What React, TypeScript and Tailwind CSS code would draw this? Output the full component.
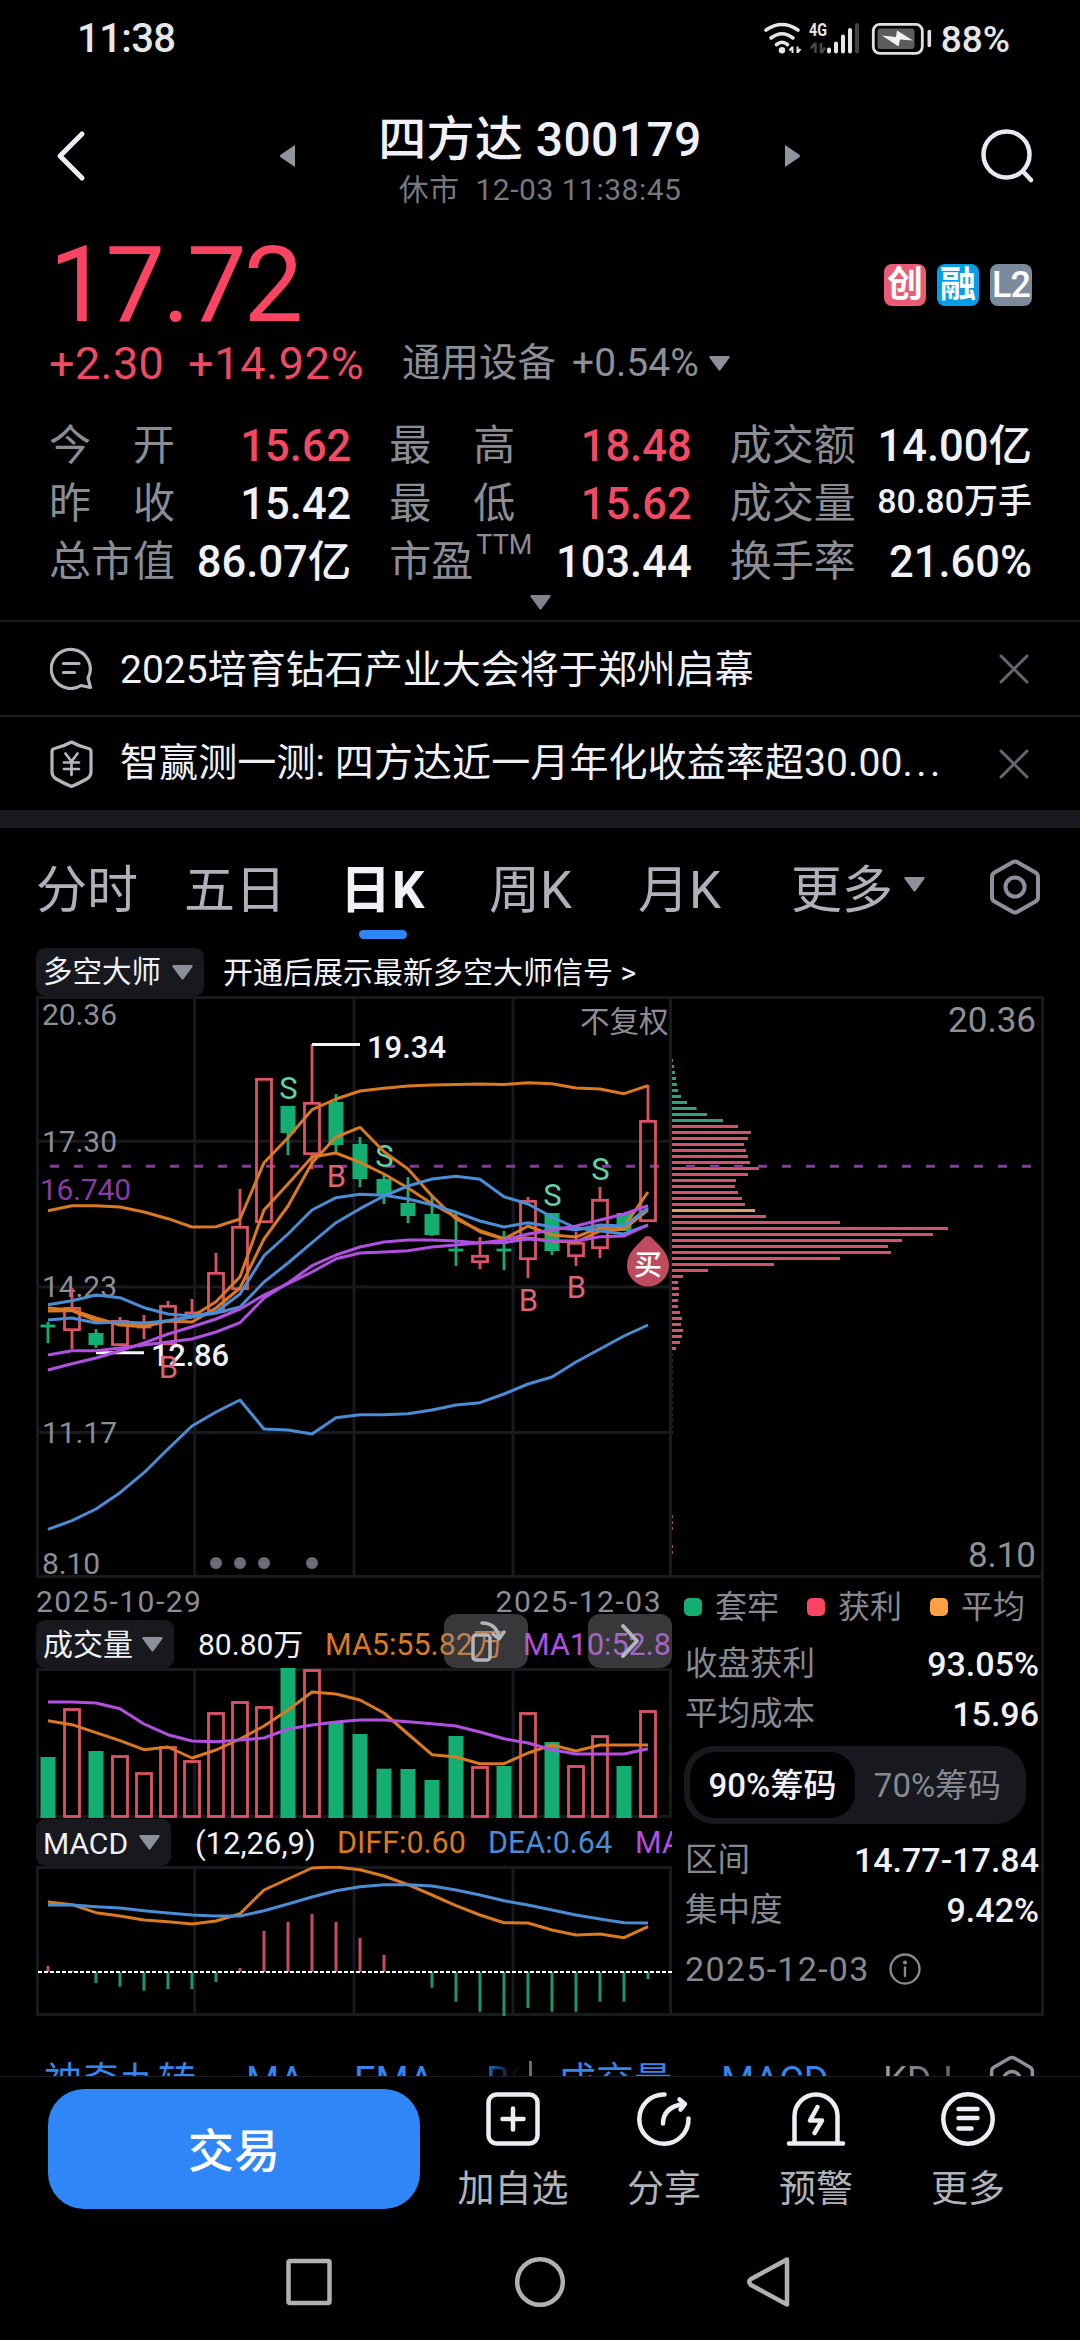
import React from 'react';

const RED = '#dc5366';
const GREEN = '#14ae73';
const ORANGE = '#d97a22';
const BLUE = '#4a8dd4';
const PURPLE = '#b150e0';
const GRID = '#191a1f';

const STEP = 24;
const FIRST_X = 48;
const xAt = (i: number) => FIRST_X + i * STEP;
const toPoints = (ys: number[]) => ys.map((y, i) => `${xAt(i)},${y}`).join(' ');

type Candle = {
  up: boolean;
  top: number;
  bottom: number;
  high: number;
  low: number;
};

const c = (up: boolean, top: number, bottom: number, high: number, low: number): Candle => ({ up, top, bottom, high, low });

const candles: Candle[] = [
  c(false, 1325, 1327, 1322, 1343),
  c(true, 1307, 1331, 1288, 1349),
  c(false, 1333, 1345, 1329, 1348),
  c(true, 1320, 1346, 1317, 1346),
  c(true, 1326, 1328, 1315, 1339),
  c(true, 1305, 1345, 1301, 1345),
  c(true, 1312, 1314, 1299, 1314),
  c(true, 1272, 1313, 1253, 1313),
  c(true, 1226, 1290, 1189, 1290),
  c(true, 1078, 1223, 1078, 1223),
  c(false, 1106, 1133, 1106, 1155),
  c(true, 1102, 1155, 1044, 1169),
  c(false, 1102, 1145, 1094, 1153),
  c(false, 1144, 1179, 1137, 1187),
  c(false, 1179, 1195, 1173, 1204),
  c(false, 1203, 1216, 1177, 1223),
  c(false, 1214, 1235, 1195, 1236),
  c(false, 1249, 1251, 1211, 1266),
  c(true, 1255, 1263, 1237, 1269),
  c(false, 1249, 1251, 1231, 1270),
  c(true, 1200, 1260, 1197, 1278),
  c(false, 1213, 1251, 1213, 1255),
  c(true, 1242, 1257, 1232, 1266),
  c(true, 1199, 1249, 1187, 1258),
  c(false, 1213, 1231, 1213, 1231),
  c(true, 1120, 1222, 1085, 1222),
];

const bollUpper = [1210.7, 1205.7, 1205.7, 1207, 1212, 1218.7, 1227, 1226.7, 1219, 1162.7, 1137.7, 1109.7, 1099, 1091, 1088.3, 1086, 1085, 1084.5, 1084, 1084.5, 1082.7, 1083.7, 1088, 1089, 1093.7, 1085.7];
const bollLower = [1529.3, 1520.7, 1509, 1492.7, 1472.7, 1449, 1426, 1412, 1400, 1429, 1430, 1434, 1417.7, 1414.7, 1414.7, 1413.7, 1410, 1405, 1402.7, 1394, 1384, 1377, 1362, 1349, 1336, 1325];

const averages: { color: string; ys: number[] }[] = [
  { color: ORANGE, ys: [1308, 1310, 1318, 1325, 1326.7, 1320.7, 1316.7, 1301.7, 1276.7, 1210, 1184, 1157, 1153, 1162.3, 1174, 1188, 1203.7, 1217, 1231.7, 1239, 1226, 1235, 1237, 1227.7, 1226.7, 1192] },
  { color: ORANGE, ys: [1311, 1310.7, 1320.7, 1323, 1325, 1321, 1322, 1308, 1288, 1239, 1206, 1163, 1137, 1127.3, 1151.7, 1169, 1196, 1219, 1230.7, 1238.7, 1238, 1241, 1242, 1231, 1229, 1210] },
  { color: BLUE, ys: [1304.7, 1300.7, 1295, 1297.7, 1307.7, 1314, 1316, 1312, 1294, 1255.7, 1234, 1210, 1197.7, 1194.3, 1195.3, 1199, 1204.7, 1212.3, 1221, 1227, 1222.7, 1226.7, 1230, 1225, 1226, 1208] },
  { color: BLUE, ys: [1320, 1318, 1323, 1322, 1323, 1320.7, 1317, 1313, 1307, 1282, 1263, 1242.7, 1222.7, 1208.7, 1196, 1186, 1179, 1176.3, 1179.3, 1196.7, 1204, 1217, 1228, 1230.7, 1234, 1225] },
  { color: PURPLE, ys: [1355, 1350.7, 1350.7, 1348, 1345, 1342, 1339, 1332, 1322.7, 1298, 1283, 1265.7, 1255, 1247, 1242, 1240, 1240, 1241, 1243, 1240, 1234, 1230, 1226, 1220, 1214, 1205.7] },
  { color: PURPLE, ys: [1370, 1363.7, 1358, 1350.7, 1343, 1334, 1326.7, 1319, 1309, 1295, 1283.7, 1272, 1258.7, 1253, 1252, 1250.7, 1247, 1245, 1242.7, 1242.7, 1239, 1241, 1241, 1236.7, 1236, 1225] },
];

const signals: { text: 'S' | 'B'; x: number; y: number }[] = [
  { text: 'B', x: 168, y: 1378 },
  { text: 'S', x: 288, y: 1099 },
  { text: 'B', x: 336, y: 1187 },
  { text: 'S', x: 384, y: 1167 },
  { text: 'B', x: 528, y: 1311 },
  { text: 'S', x: 552, y: 1206 },
  { text: 'B', x: 576, y: 1298 },
  { text: 'S', x: 600, y: 1180 },
];

const chips = [1, 2, 3, 4, 5, 6, 9, 15, 24.5, 35, 51, 66, 79, 76, 72, 74, 76, 78, 87, 76, 64, 63, 66, 70, 73, 83, 94, 168, 276, 261, 230, 216, 219, 168, 102, 36, 11, 6, 7, 7, 6, 6, 8, 10, 9, 11, 10, 8, 4];

const volumes: [number, boolean][] = [
  [1757, false], [1708, true], [1751, false], [1755, true], [1772, true], [1746, true], [1760, true], [1712, true], [1701, true],
  [1706, true], [1668, false], [1669, true], [1722, false], [1734, false], [1768.7, false], [1769, false], [1780, false], [1736, false],
  [1766, true], [1766, false], [1712, true], [1742, false], [1765, true], [1735, true], [1766, false], [1710, true],
];
const volMa5 = [1720.7, 1724.7, 1732.7, 1740.7, 1749.7, 1747, 1758, 1750, 1739, 1726, 1710, 1692, 1694, 1700, 1713, 1734, 1754.7, 1757, 1763.7, 1763.7, 1753, 1745, 1751, 1745, 1745, 1745];
const volMa10 = [1702, 1702, 1703, 1708.7, 1724, 1734.7, 1741, 1741.7, 1740, 1738, 1729, 1725, 1722, 1720, 1720, 1721.7, 1723.7, 1726, 1732, 1738.7, 1743, 1749.7, 1754, 1754, 1754, 1748.7];

const diff = [1902, 1904.7, 1912.7, 1916, 1920, 1921.7, 1924, 1921, 1913.7, 1890, 1879, 1868, 1867, 1869.7, 1876, 1884.7, 1895, 1905.7, 1915, 1922.7, 1923, 1930, 1935, 1934, 1937.7, 1926.7];
const dea = [1905, 1905, 1906.7, 1908, 1910.7, 1913, 1915, 1916, 1916, 1910.7, 1904, 1897, 1890.7, 1886.7, 1884.7, 1884.7, 1886, 1890, 1895, 1900.7, 1905, 1910, 1915, 1919, 1922.7, 1923];
const macdBars = [1966, 1970.7, 1983, 1986.7, 1990.7, 1989, 1989, 1982, 1968, 1931, 1922, 1914, 1922, 1938, 1955, 1970.7, 1987.7, 2001.7, 2011.7, 2016, 2008, 2011.7, 2011.7, 2001.7, 2001.7, 1979];
const ZERO_Y = 1972;

const Caret = ({ className }: { className?: string }) => (
  <svg className={className} viewBox="0 0 21 15" fill="currentColor">
    <path d="M1.5 0h18c1 0 1.500 1 1 1.800L11.500 14c-.5.8-1.500.8-2 0L.5 1.800C0 1 .5 0 1.500 0z" />
  </svg>
);

const CloseIcon = () => (
  <svg className="h-[30px] w-[30px]" viewBox="0 0 30 30" fill="none" stroke="#646771" strokeWidth={3} strokeLinecap="round">
    <path d="M2 2l26 26M28 2L2 28" />
  </svg>
);

const HexIcon = ({ className }: { className?: string }) => (
  <svg className={className} viewBox="0 0 52 56" fill="none" stroke="currentColor" strokeWidth={4} strokeLinejoin="round">
    <path d="M23.500 3.200a5 5 0 015 0l18 10.300a5 5 0 012.500 4.300v20.400a5 5 0 01-2.500 4.300l-18 10.300a5 5 0 01-5 0l-18-10.300A5 5 0 013 38.200V17.800a5 5 0 012.500-4.300z" />
    <circle cx="26" cy="28" r="9.500" />
  </svg>
);

const StatusBar = () => (
  <div className="flex h-[78px] items-center justify-between pl-[77px] pr-[70px] text-[#e6e6e6]">
    <span className="text-[40px] font-medium leading-none tracking-[-0.6px]">11:38</span>
    <div className="flex items-center">
      <svg className="h-[36px] w-[176px] overflow-visible" viewBox="760 19 176 36">
        <g fill="none" stroke="#e6e6e6" strokeWidth={3.6} strokeLinecap="round">
          <path d="M764 28q16-11 32 0" />
          <path d="M769 36q11-8.500 22 0" />
          <path d="M774.500 42.500q5.500-4.500 11 0" />
        </g>
        <circle cx="780" cy="48.300" r="3.200" fill="#e6e6e6" />
        <path d="M790.500 44.500v6.500M790.500 45l-3 3.500M795.500 51v-6.500M795.500 50.500l3-3.500" stroke="#e6e6e6" strokeWidth={2} fill="none" />
        <text x="807" y="34" fontSize="18" fontWeight="700" textLength="18" lengthAdjust="spacingAndGlyphs" fill="#e6e6e6">4G</text>
        <path d="M813.500 41v10M813 41l-4 5.500M819 51V41M819.500 51l3.500-5.500" stroke="#4a4a4a" strokeWidth={2.500} fill="none" />
        <g strokeWidth={4} strokeLinecap="round" stroke="#e6e6e6">
          <path d="M827 47.500v2M834 41.500v8M841 34.500v15M848 28v21.500" />
          <path d="M855 23v26.500" stroke="#444" />
        </g>
        <rect x="871.300" y="22.300" width="49" height="29" rx="6.500" fill="none" stroke="#e0e0e0" strokeWidth={2.800} />
        <rect x="875.500" y="26.500" width="37" height="20.500" rx="3" fill="#5c5c5c" />
        <path d="M880 33.500l14 1.500 1-6.500 16 10-13-1-1.500 7z" fill="#f0f0f0" />
        <path d="M927.300 29.500v14" stroke="#e0e0e0" strokeWidth={3.600} strokeLinecap="round" />
      </svg>
      <span className="ml-[3px] text-[37px] font-medium leading-none">88%</span>
    </div>
  </div>
);

const Header = () => (
  <div className="flex h-[156px] items-center pl-[55px]">
    <svg className="h-[52px] w-[32px]" viewBox="0 0 32 52" fill="none" stroke="#eceef6" strokeWidth={5} strokeLinecap="round" strokeLinejoin="round">
      <path d="M27 4L5 26l22 22" />
    </svg>
    <svg className="ml-[193px] h-[22px] w-[15px]" viewBox="0 0 15 22" fill="#9195a0">
      <path d="M15 0v22L1 12.500q-2-1.500 0-3z" />
    </svg>
    <div className="flex w-[490px] flex-col items-center whitespace-nowrap pt-[10px]">
      <div className="text-[48px] font-medium leading-[56px] tracking-[0.4px] text-[#f0f1f8]">四方达 300179</div>
      <div className="mt-[2px] text-[30px] leading-[40px] tracking-[0.5px] text-[#757881]">休市&nbsp; 12-03 11:38:45</div>
    </div>
    <svg className="h-[22px] w-[15px]" viewBox="0 0 15 22" fill="#9195a0">
      <path d="M0 0v22l14-9.500q2-1.500 0-3z" />
    </svg>
    <svg className="ml-[179px] h-[56px] w-[56px]" viewBox="0 0 56 56" fill="none" stroke="#e8eaf3" strokeWidth={4.500} strokeLinecap="round">
      <circle cx="27.500" cy="26.500" r="23" />
      <path d="M44.500 44l7.500 8" />
    </svg>
  </div>
);

const Quote = () => (
  <div className="pl-[49px] pr-[48px]">
    <div className="flex h-[102px] items-center justify-between">
      <span className="text-[106px] leading-[102px] tracking-[-3px] text-[#fb4362]">17.72</span>
      <div className="flex gap-[11px] text-[36px] font-bold leading-[42px] text-white">
        <span className="h-[42px] w-[42px] rounded-[8px] bg-[#eb5c74] text-center">创</span>
        <span className="h-[42px] w-[42px] rounded-[8px] bg-[#069fe5] text-center">融</span>
        <span className="h-[42px] w-[42px] rounded-[8px] bg-[#7c8a9e] text-center font-medium tracking-[-1px]">L2</span>
      </div>
    </div>
    <div className="flex h-[54px] items-center whitespace-nowrap pt-[1px] leading-none">
      <span className="w-[139px] text-[45px] tracking-[0.4px] text-[#ee4a64]">+2.30</span>
      <span className="w-[214px] text-[45px] tracking-[0.7px] text-[#ee4a64]">+14.92%</span>
      <span className="w-[170px] text-[38.500px] text-[#8c8f98]">通用设备</span>
      <span className="text-[39px] text-[#8c8f98]">+0.54%</span>
      <Caret className="ml-[10px] h-[15px] w-[21px] text-[#8c909b]" />
    </div>
  </div>
);

interface StatProps {
  label: string;
  value: string;
  red?: boolean;
  small?: boolean;
  sup?: string;
}

const Stat = ({ label, value, red, small, sup }: StatProps) => (
  <div className="flex h-[58px] items-center justify-between whitespace-nowrap leading-none">
    <div className={`relative flex text-[42px] text-[#8b8d95] ${sup ? '' : 'w-[126px] justify-between'}`}>
      {label.split('').map((ch, i) => <span key={i}>{ch}</span>)}
      {sup && <span className="absolute left-[87px] top-[-9px] text-[27px]">{sup}</span>}
    </div>
    <span className={`font-medium ${red ? 'text-[#f24a63]' : 'text-[#f0f1f7]'} ${small ? 'pb-[6px] text-[34px]' : 'pt-[1px] text-[43.500px]'}`}>{value}</span>
  </div>
);

const Stats = () => (
  <div className="pt-[27px]">
    <div className="grid grid-cols-3 gap-x-[38px] pl-[49px] pr-[48px]">
      <Stat label="今开" value="15.62" red />
      <Stat label="最高" value="18.48" red />
      <Stat label="成交额" value="14.00亿" />
      <Stat label="昨收" value="15.42" />
      <Stat label="最低" value="15.62" red />
      <Stat label="成交量" value="80.80万手" small />
      <Stat label="总市值" value="86.07亿" />
      <Stat label="市盈" value="103.44" sup="TTM" />
      <Stat label="换手率" value="21.60%" />
    </div>
    <div className="flex h-[29px] justify-center pt-[4px]">
      <Caret className="h-[15px] w-[21px] text-[#80838f]" />
    </div>
  </div>
);

const News = () => (
  <div className="border-b-[18px] border-[#181a1f]">
    <div className="flex h-[95px] items-center border-t-2 border-[#1b1c20] pl-[50px] pr-[51px]">
      <svg className="h-[43px] w-[43px]" viewBox="0 0 43 43" fill="none" stroke="#b3b6be" strokeWidth={3.200} strokeLinecap="round" strokeLinejoin="round">
        <path d="M31 38.500A19.500 19.500 0 1138 31l2.500 9.500z" />
        <path d="M13.500 16.500H29M13.500 25.500h11" />
      </svg>
      <span className="ml-[27px] flex-1 pt-[4px] text-[39px] leading-none text-[#f0f1f7]">2025培育钻石产业大会将于郑州启幕</span>
      <CloseIcon />
    </div>
    <div className="flex h-[95px] items-center border-t-2 border-[#1b1c20] pl-[50px] pr-[51px]">
      <svg className="h-[48px] w-[43px]" viewBox="0 0 43 48" fill="none" stroke="#b3b6be" strokeWidth={3.200} strokeLinecap="round" strokeLinejoin="round">
        <path d="M21.500 2q8 4.500 17 6.500a3 3 0 012.500 3V32q0 4-3.500 6.500Q29 43.500 21.500 46.500 14 43.500 5.500 38.500 2 36 2 32V11.500a3 3 0 012.500-3Q13.500 6.500 21.500 2z" />
        <path d="M15.500 13.500l6 8 6-8M21.500 21.500V35M14 22.500h15M14 29h15" strokeWidth={2.700} />
      </svg>
      <span className="ml-[27px] flex-1 whitespace-nowrap text-[39px] leading-none tracking-[0.1px] text-[#f0f1f7]">
        智赢测一测: 四方达近一月年化收益率超30.00<span className="tracking-[3.5px]">...</span>
      </span>
      <CloseIcon />
    </div>
  </div>
);

const Tabs = () => (
  <div className="flex h-[120px] pl-[36px] text-[51px] leading-[126px] text-[#aeb1ba]">
    <span className="w-[148px]">分时</span>
    <span className="w-[156px]">五日</span>
    <div className="relative w-[149px] font-bold tracking-[1px] text-[#f0f1f8]">
      日K
      <i className="absolute left-[19px] top-[102px] h-[9px] w-[48px] rounded-full bg-[#2e86f7]" />
    </div>
    <span className="w-[149px]">周K</span>
    <span className="w-[153px]">月K</span>
    <span className="w-[113px]">更多</span>
    <Caret className="mt-[49px] h-[15px] w-[21px] text-[#8c909b]" />
    <HexIcon className="ml-[64px] mt-[31px] h-[56px] w-[52px] text-[#8c909b]" />
  </div>
);

const Chip = ({ label, className }: { label: string; className: string }) => (
  <div className={`flex h-full shrink-0 items-center justify-between rounded-[9px] bg-[#17191e] pl-[7px] pr-[11px] text-[#f0f1f7] ${className}`}>
    <span className="pt-[2px]">{label}</span>
    <Caret className="h-[15px] w-[21px] text-[#8c909b]" />
  </div>
);

const KLineChart = () => (
  <svg className="block h-[582px] w-[636px]" viewBox="36 996 636 582">
    <g stroke={GRID} strokeWidth={3} fill="none">
      <path d="M37.500 996v582M194.700 998v579M354 998v579M513 998v579M670.500 996v582" />
      <path d="M36 997.500h636M36 1141.300h636M36 1287h636M36 1432.500h636M36 1576.500h636" />
    </g>
    <g fill="#8b8e97" fontSize="30">
      <text x="42" y="1025" textLength="75">20.36</text>
      <text x="42" y="1152" textLength="75">17.30</text>
      <text x="42" y="1297" textLength="75">14.23</text>
      <text x="42" y="1443" textLength="75">11.17</text>
      <text x="42" y="1574" textLength="58">8.10</text>
      <text x="580" y="1032" fontSize="29.500">不复权</text>
      <text x="40" y="1200" textLength="91" fill="#873ba5">16.740</text>
    </g>
    <path d="M50 1166.300H672" stroke="#813a9e" strokeWidth={3} strokeDasharray="9 15" />
    {candles.map((k, i) => {
      const x = xAt(i);
      const color = k.up ? RED : GREEN;
      const doji = k.bottom - k.top < 4;
      return (
        <g key={i} stroke={color} strokeWidth={2.800} fill="none">
          <path d={`M${x} ${k.high}V${k.top}M${x} ${k.bottom}V${k.low}`} />
          {doji && <path d={`M${x - 7.500} ${k.top + 1}h15`} />}
          {!doji && k.up && <rect x={x - 7.500} y={k.top + 1.300} width={15} height={k.bottom - k.top - 2.600} />}
          {!doji && !k.up && <rect x={x - 7.500} y={k.top} width={15} height={k.bottom - k.top} fill={color} stroke="none" />}
        </g>
      );
    })}
    <g stroke="#f4f4f8" strokeWidth={3}>
      <path d="M312 1044.500h48M96 1352.700h48" />
    </g>
    <g fill="#f0f1f7" fontSize="31" fontWeight="500">
      <text x="367" y="1058" textLength="79">19.34</text>
      <text x="151" y="1366" textLength="78">12.86</text>
    </g>
    <g fontSize="31" textAnchor="middle">
      {signals.map((s, i) => (
        <text key={i} x={s.x + 0.500} y={s.y} fill={s.text === 'S' ? '#5fd3a6' : '#dd6377'}>{s.text}</text>
      ))}
    </g>
    <g fill="none" strokeWidth={3} strokeLinejoin="round">
      <polyline points={toPoints(bollUpper)} stroke={ORANGE} />
      {averages.map((line, i) => (
        <polyline key={i} points={toPoints(line.ys)} stroke={line.color} />
      ))}
      <polyline points={toPoints(bollLower)} stroke={BLUE} />
    </g>
    <path d="M648 1236c3 0 5 3 8 6 7 7 13 13 13 23.500a21 21 0 01-42 0c0-10.500 6-16.500 13-23.500 3-3 5-6 8-6z" fill="#bf4b5e" />
    <text x="648" y="1275" textAnchor="middle" fontSize="28" fontWeight="500" fill="#fff">买</text>
    <g fill="#6b6c78">
      {[216, 240, 264, 312].map(x => <circle key={x} cx={x} cy={1563} r={6} />)}
    </g>
  </svg>
);

const ChipChart = () => (
  <svg className="block h-[582px] w-[372px]" viewBox="672 996 372 582">
    <path d="M672 997.500h370.500V1578M672 1576.500h372" stroke={GRID} strokeWidth={3} fill="none" />
    {chips.map((w, i) => (
      <rect key={i} x={672} y={1059 + i * 6} width={w} height={3} fill={i < 11 ? '#35a077' : i === 25 ? '#e2a05f' : '#d0556a'} />
    ))}
    <path d="M672.500 1353v84" stroke="#3a2024" strokeDasharray="3 3" />
    <path d="M672.500 1515v15M672.500 1545v12" stroke="#b04557" strokeDasharray="3 3" />
    <path d="M686 1166.300h346" stroke="#813a9e" strokeWidth={3} strokeDasharray="9 15" />
    <g fill="#8e9094" fontSize="35">
      <text x="948" y="1032" textLength="88">20.36</text>
      <text x="968" y="1567" textLength="68">8.10</text>
    </g>
  </svg>
);

const VolumeChart = () => (
  <svg className="block h-[151px] w-[636px]" viewBox="36 1668 636 151">
    <path d="M37.500 1668v150M194.700 1668v150M354 1668v150M513 1668v150M670.500 1668v150M36 1669.500h636M36 1816.500h636" stroke={GRID} strokeWidth={3} fill="none" />
    {volumes.map(([top, up], i) =>
      up ? (
        <rect key={i} x={xAt(i) - 7.500} y={top + 1.500} width={15} height={1815 - top} fill="none" stroke={RED} strokeWidth={2.800} />
      ) : (
        <rect key={i} x={xAt(i) - 7.500} y={top} width={15} height={1818 - top} fill={GREEN} />
      )
    )}
    <g fill="none" strokeWidth={3} strokeLinejoin="round">
      <polyline points={toPoints(volMa5)} stroke={ORANGE} />
      <polyline points={toPoints(volMa10)} stroke={PURPLE} />
    </g>
  </svg>
);

const MacdChart = () => (
  <svg className="block h-[150px] w-[636px]" viewBox="36 1866 636 150">
    <path d="M37.500 1866v150M194.700 1866v150M354 1866v150M513 1866v150M670.500 1866v150M36 1867.500h636M36 2014.500h636" stroke={GRID} strokeWidth={3} fill="none" />
    {macdBars.map((y, i) => (
      <path key={i} d={`M${xAt(i)} ${ZERO_Y}V${y}`} stroke={y < ZERO_Y ? '#c94d60' : '#23926a'} strokeWidth={3} />
    ))}
    <path d="M38 1972H672" stroke="#fff" strokeWidth={2} strokeDasharray="4 2" />
    <g fill="none" strokeWidth={3} strokeLinejoin="round">
      <polyline points={toPoints(diff)} stroke={ORANGE} />
      <polyline points={toPoints(dea)} stroke={BLUE} />
    </g>
  </svg>
);

const ChartColumn = () => (
  <div className="w-[636px] shrink-0 overflow-hidden text-[30px] leading-none">
    <KLineChart />
    <div className="flex h-[42px] items-center justify-between pr-[10px] pt-[5px] tracking-[1.5px] text-[#8b8e97]">
      <span>2025-10-29</span>
      <span>2025-12-03</span>
    </div>
    <div className="relative flex h-[48px] items-center whitespace-nowrap">
      <Chip label="成交量" className="w-[138px]" />
      <span className="ml-[24px] w-[127px] shrink-0 pt-[2px] text-[30px] text-[#f0f1f7]">80.80万</span>
      <span className="w-[198px] shrink-0 pt-[2px] text-[30.500px] text-[#d97a22]">MA5:55.82万</span>
      <span className="shrink-0 pt-[2px] text-[30.500px] text-[#b150e0]">MA10:52.82万</span>
      <div className="absolute right-[144px] top-[-6px] flex h-[54px] w-[84px] items-center justify-center rounded-[12px] bg-[#8c8c94]/40">
        <svg className="h-[44px] w-[40px]" viewBox="0 0 40 44" fill="none" stroke="#b4b5bb" strokeWidth={3.500} strokeLinecap="round" strokeLinejoin="round">
          <rect x="7" y="16" width="17" height="25" rx="3" />
          <path d="M16 4q14 0 17 14M27 15l6 5 5-7" />
        </svg>
      </div>
      <div className="absolute right-0 top-[-6px] flex h-[54px] w-[84px] items-center justify-center rounded-[12px] bg-[#8c8c94]/40">
        <svg className="h-[36px] w-[20px]" viewBox="0 0 20 36" fill="none" stroke="#b4b5bb" strokeWidth={4} strokeLinecap="round" strokeLinejoin="round">
          <path d="M3 3l14 15L3 33" />
        </svg>
      </div>
    </div>
    <VolumeChart />
    <div className="flex h-[47px] items-center whitespace-nowrap">
      <Chip label="MACD" className="w-[135px]" />
      <span className="ml-[24px] w-[142px] shrink-0 pt-[2px] text-[31px] text-[#f0f1f7]">(12,26,9)</span>
      <span className="w-[151px] shrink-0 pt-[2px] text-[30.500px] text-[#d97a22]">DIFF:0.60</span>
      <span className="w-[147px] shrink-0 pt-[2px] text-[30.500px] text-[#4a8dd4]">DEA:0.64</span>
      <span className="shrink-0 pt-[2px] text-[30.500px] text-[#b150e0]">MACD:-0.09</span>
    </div>
    <MacdChart />
  </div>
);

const legend = [
  { label: '套牢', dot: 'bg-[#14ae73]' },
  { label: '获利', dot: 'bg-[#fb4362]' },
  { label: '平均', dot: 'bg-[#ffa043]' },
];

const InfoRow = ({ label, value }: { label: string; value: string }) => (
  <div className="flex h-[50px] items-center justify-between pr-[2px]">
    <span className="text-[32.500px] text-[#868992]">{label}</span>
    <span className="text-[34px] font-medium text-[#f0f1f7]">{value}</span>
  </div>
);

const ChipPanel = () => (
  <div className="h-[438px] border-b-[3px] border-r-[3px] border-[#191a1f] pl-[13px] leading-none">
    <div className="flex h-[61px] items-center pb-[3px]">
      {legend.map(item => (
        <div key={item.label} className="flex w-[123px] shrink-0 items-center text-[32px] text-[#868992]">
          <i className={`ml-[-1px] mr-[13px] h-[18px] w-[18px] rounded-[5px] ${item.dot}`} />
          {item.label}
        </div>
      ))}
    </div>
    <InfoRow label="收盘获利" value="93.05%" />
    <InfoRow label="平均成本" value="15.96" />
    <div className="ml-[-1px] mt-[7px] flex h-[78px] w-[342px] rounded-[30px] bg-[#17191e] p-[6px] text-[33px] leading-[68px]">
      <span className="h-[66px] w-[165px] rounded-[25px] bg-black text-center font-medium text-[#f0f1f7]">90%筹码</span>
      <span className="flex-1 text-center text-[#868992]">70%筹码</span>
    </div>
    <div className="mt-[11px]">
      <InfoRow label="区间" value="14.77-17.84" />
      <InfoRow label="集中度" value="9.42%" />
    </div>
    <div className="mt-[7px] flex h-[54px] items-center text-[34px] tracking-[1.3px] text-[#868992]">
      2025-12-03
      <svg className="ml-[19px] h-[32px] w-[32px]" viewBox="0 0 32 32" fill="none" stroke="#868992" strokeWidth={2.400} strokeLinecap="round">
        <circle cx="16" cy="16" r="14.500" />
        <path d="M16 14.500V23" />
        <circle cx="16" cy="9.500" r="0.900" fill="#868992" />
      </svg>
    </div>
  </div>
);

const IndicatorStrip = () => (
  <div className="mt-[36px] flex h-[24px] overflow-hidden whitespace-nowrap pl-[44px] text-[38px] leading-[58px] text-[#3585ec]">
    <span className="w-[202px]">神奇九转</span>
    <span className="w-[108px]">MA</span>
    <span className="w-[132px]">EMA</span>
    <span className="w-[43px] overflow-hidden bg-gradient-to-r from-[#2a6bbd] to-black bg-clip-text text-transparent">BOLL</span>
    <i className="mr-[26px] mt-[9px] h-[40px] w-[3px] bg-[#6a6b74]" />
    <span className="w-[163px]">成交量</span>
    <span className="w-[162px]">MACD</span>
    <span className="w-[106px] overflow-hidden bg-gradient-to-r from-[#9a9da6] to-[#44464c] bg-clip-text text-transparent">KDJ</span>
    <HexIcon className="mt-[3px] h-[50px] w-[46px] shrink-0 text-[#8c909b]" />
  </div>
);

const iconProps = {
  className: 'h-[58px] w-[60px]',
  viewBox: '0 0 60 58',
  fill: 'none',
  stroke: '#eceef6',
  strokeWidth: 4.5,
  strokeLinecap: 'round' as const,
  strokeLinejoin: 'round' as const,
};

const actions: { label: string; width: string; icon: React.ReactNode }[] = [
  {
    label: '加自选',
    width: 'w-[150px]',
    icon: (
      <svg {...iconProps}>
        <rect x="5.500" y="4.500" width="49" height="49" rx="8" />
        <path d="M30 18.500v21M19.500 29h21" />
      </svg>
    ),
  },
  {
    label: '分享',
    width: 'w-[152px]',
    icon: (
      <svg {...iconProps}>
        <path d="M30.500 4.500A24.600 24.600 0 1054.500 28.500" />
        <path d="M29 33.500Q29 17.500 49 14" />
        <path d="M45.500 9.500l5.500 4.500-4.500 5.500" />
      </svg>
    ),
  },
  {
    label: '预警',
    width: 'w-[152px]',
    icon: (
      <svg {...iconProps}>
        <path d="M8.500 53V26a21.500 21.500 0 0143 0v27M3 53.500h54" />
        <path d="M31.500 17l-7.500 13.500h12L28.500 43" />
      </svg>
    ),
  },
  {
    label: '更多',
    width: 'w-[152px]',
    icon: (
      <svg {...iconProps}>
        <circle cx="30" cy="29" r="24.700" />
        <path d="M20.500 19h19M20.500 28h19M20.500 38.500h13" />
      </svg>
    ),
  },
];

const ActionBar = () => (
  <div className="flex h-[159px] border-t border-[#1e1f22] pl-[48px]">
    <button className="mt-[12px] h-[120px] w-[372px] rounded-[36px] bg-[#2e86f7] text-[46px] font-medium leading-[124px] text-white">交易</button>
    <div className="ml-[18px] flex">
      {actions.map(a => (
        <div key={a.label} className={`flex flex-col items-center pt-[13px] ${a.width}`}>
          {a.icon}
          <span className="mt-[20px] text-[37px] leading-[44px] text-[#b1b3bb]">{a.label}</span>
        </div>
      ))}
    </div>
  </div>
);

const SystemNav = () => (
  <div className="flex h-[104px] items-start pl-[284px] pt-[20px]">
    <svg className="h-[54px] w-[510px]" viewBox="284 2255 510 54" fill="none" stroke="#b1b1b1" strokeWidth={4.500} strokeLinejoin="round">
      <rect x="288.500" y="2261" width="41" height="42" rx="1.500" />
      <circle cx="540" cy="2282" r="22.800" />
      <path d="M787 2259.500v45L751 2285q-3.500-3 0-6z" />
    </svg>
  </div>
);

export default function App() {
  return (
    <div className='h-[2340px] w-[1080px] overflow-hidden bg-black font-["Roboto","Noto_Sans_CJK_SC",sans-serif]'>
      <StatusBar />
      <Header />
      <Quote />
      <Stats />
      <News />
      <Tabs />
      <div className="flex h-[48px] items-center pl-[36px] text-[29.500px] leading-none text-[#f0f1f7]">
        <Chip label="多空大师" className="w-[168px]" />
        <span className="ml-[19px] pt-[2px] text-[30px]">开通后展示最新多空大师信号 &gt;</span>
      </div>
      <div className="flex h-[1020px] pl-[36px]">
        <ChartColumn />
        <div className="w-[372px]">
          <ChipChart />
          <ChipPanel />
        </div>
      </div>
      <IndicatorStrip />
      <ActionBar />
      <SystemNav />
    </div>
  );
}
